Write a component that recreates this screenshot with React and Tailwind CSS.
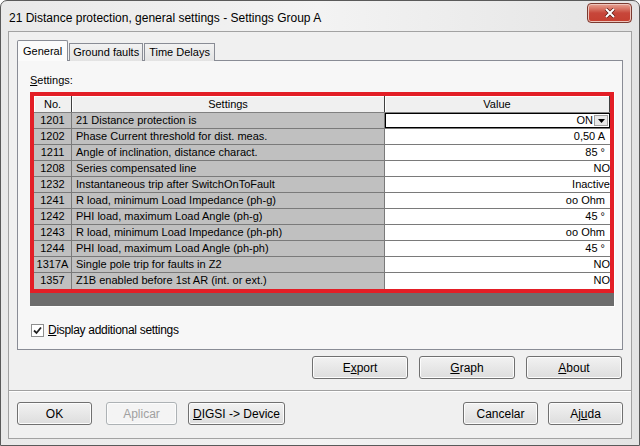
import React from "react";

const rows = [
  ["1201", "21 Distance protection is", "ON", "dropdown"],
  ["1202", "Phase Current threshold for dist. meas.", "0,50 A", "unit"],
  ["1211", "Angle of inclination, distance charact.", "85 °", "unit"],
  ["1208", "Series compensated line", "NO", ""],
  ["1232", "Instantaneous trip after SwitchOnToFault", "Inactive", ""],
  ["1241", "R load, minimum Load Impedance (ph-g)", "oo Ohm", "unit"],
  ["1242", "PHI load, maximum Load Angle (ph-g)", "45 °", "unit"],
  ["1243", "R load, minimum Load Impedance (ph-ph)", "oo Ohm", "unit"],
  ["1244", "PHI load, maximum Load Angle (ph-ph)", "45 °", "unit"],
  ["1317A", "Single pole trip for faults in Z2", "NO", ""],
  ["1357", "Z1B enabled before 1st AR (int. or ext.)", "NO", ""],
];

function Btn({ children, className = "", disabled }) {
  return (
    <button
      className={
        "h-[23px] border border-[#707070] rounded-[3px] bg-gradient-to-b from-[#f2f2f2] to-[#dddddd] text-[12px] shadow-[inset_0_0_0_1px_#fcfcfc] " +
        (disabled ? "text-[#a0a0a0] border-[#adb2b5] from-[#f4f4f4] to-[#f4f4f4] " : "text-black ") +
        className
      }
    >
      {children}
    </button>
  );
}

export default function App() {
  return (
    <div
      className="w-[640px] h-[446px] overflow-hidden bg-white"
      style={{ fontFamily: '"Liberation Sans", Arial, sans-serif' }}
    >
      <div className="w-[640px] h-[446px] rounded-t-[7px] border border-[#5a5a5a] bg-gradient-to-r from-[#e9e9e9] via-[#f3f3f3] to-[#e4e4e4] flex flex-col">
        {/* title bar */}
        <div className="h-[30px] flex items-start justify-between pl-[8px] pr-[7px]">
          <div className="text-[12px] text-black mt-[10px] leading-[15px]">
            21 Distance protection, general settings - Settings Group A
          </div>
          <div className="mt-[2px] w-[45px] h-[20px] rounded-[4px] border border-[#7a3a30] bg-gradient-to-b from-[#e6a394] via-[#c7463a] to-[#c53f30] flex items-center justify-center shadow-[inset_0_0_0_1px_#eec4bb]">
            <svg width="12" height="10" viewBox="0 0 12 10">
              <path d="M2 1 L10 9 M10 1 L2 9" stroke="#5a1a14" strokeWidth="3.4" />
              <path d="M2 1 L10 9 M10 1 L2 9" stroke="#ffffff" strokeWidth="2" />
            </svg>
          </div>
        </div>

        {/* client area */}
        <div className="mx-[7px] h-[408px] border border-[#a2a2a2] bg-[#f0f0f0] flex flex-col pl-[8px] pr-[8px] pt-[8px]">
          {/* tabs */}
          <div className="flex items-end h-[21px] text-[11px] relative z-10">
            <div className="h-[21px] px-[5px] border border-[#898c95] border-b-0 bg-[#fbfbfb] flex items-center rounded-t-[2px]">
              General
            </div>
            <div className="h-[18px] ml-[1px] px-[3px] border border-[#898c95] border-b-0 bg-gradient-to-b from-[#f2f2f2] to-[#e3e3e3] flex items-center">
              Ground faults
            </div>
            <div className="h-[18px] ml-[1px] px-[4px] border border-[#898c95] border-b-0 bg-gradient-to-b from-[#f2f2f2] to-[#e3e3e3] flex items-center">
              Time Delays
            </div>
          </div>
          <div className="h-[290px] -mt-[1px] border border-[#898c95] bg-[#f7f7f7] pl-[12px] pt-[13px] flex flex-col">
            <div className="text-[11px] leading-[13px] text-black">
              <span className="underline">S</span>ettings:
            </div>
            <div className="mt-[5px] w-[585px] h-[215px] bg-[#6d6d6d] border-r border-b border-white">
              <div className="border-[4px] border-[#e31e26] w-[584px] bg-[#c0c0c0] text-[11px] text-black">
                {/* header */}
                <div className="flex h-[17px] bg-[#f0f0f0] border-b border-[#808080]">
                  <div className="w-[38px] text-center leading-[16px] border-r border-[#404040] shadow-[inset_1px_1px_0_#ffffff]">No.</div>
                  <div className="w-[313px] text-center leading-[16px] border-r border-[#404040] shadow-[inset_1px_1px_0_#ffffff]">Settings</div>
                  <div className="flex-1 text-center leading-[16px] border-r border-[#404040] shadow-[inset_1px_1px_0_#ffffff]">Value</div>
                </div>
                {rows.map(([no, label, val, kind], i) => (
                  <div
                    key={no}
                    className={"flex h-[16px] " + (i < rows.length - 1 ? "border-b border-[#7a7a7a]" : "")}
                  >
                    <div className="w-[38px] text-center leading-[15px] border-r border-[#7a7a7a]">{no}</div>
                    <div className="w-[313px] pl-[4px] leading-[15px] border-r border-[#7a7a7a]">{label}</div>
                    <div className="flex-1 bg-white leading-[15px] text-right">
                      {kind === "dropdown" ? (
                        <div className="h-[15px] border border-black flex items-center justify-end">
                          <span className="leading-[13px]">ON</span>
                          <div className="ml-[1px] mr-[1px] w-[14px] h-[11px] bg-[#e8e8e8] border border-[#a0a0a0] flex items-center justify-center">
                            <svg width="7" height="4" viewBox="0 0 7 4">
                              <path d="M0 0 H7 L3.5 4 Z" fill="#000" />
                            </svg>
                          </div>
                        </div>
                      ) : (
                        <span className={kind === "unit" ? "pr-[5px]" : ""}>{val}</span>
                      )}
                    </div>
                  </div>
                ))}
              </div>
            </div>
            <div className="mt-[14px] flex items-center text-[11px]">
              <div className="w-[13px] h-[13px] border border-[#8e8f8f] bg-white flex items-center justify-center ml-[1px]">
                <svg width="9" height="9" viewBox="0 0 9 9">
                  <path d="M1 4.5 L3.5 7 L8 1.5" stroke="#222" strokeWidth="1.8" fill="none" />
                </svg>
              </div>
              <span className="ml-[4px] text-[12px] tracking-[-0.3px]">
                <span className="underline">D</span>isplay additional settings
              </span>
            </div>
          </div>

          {/* lower buttons */}
          <div className="flex justify-end gap-[11px] mt-[6px] pr-[1px]">
            <Btn className="w-[96px]">E<span className="underline">x</span>port</Btn>
            <Btn className="w-[96px]"><span className="underline">G</span>raph</Btn>
            <Btn className="w-[96px]"><span className="underline">A</span>bout</Btn>
          </div>
          <div className="mt-[11px] -mx-[8px] border-t border-[#a0a0a0] border-b border-b-white" />
          <div className="flex mt-[10px]">
            <Btn className="w-[75px]">OK</Btn>
            <Btn className="w-[71px] ml-[14px]" disabled>Aplicar</Btn>
            <Btn className="w-[97px] ml-[11px]"><span className="underline">D</span>IGSI -&gt; Device</Btn>
            <div className="flex-1" />
            <Btn className="w-[75px]">Cancelar</Btn>
            <Btn className="w-[75px] ml-[10px]">Aj<span className="underline">u</span>da</Btn>
          </div>
        </div>
      </div>
    </div>
  );
}
